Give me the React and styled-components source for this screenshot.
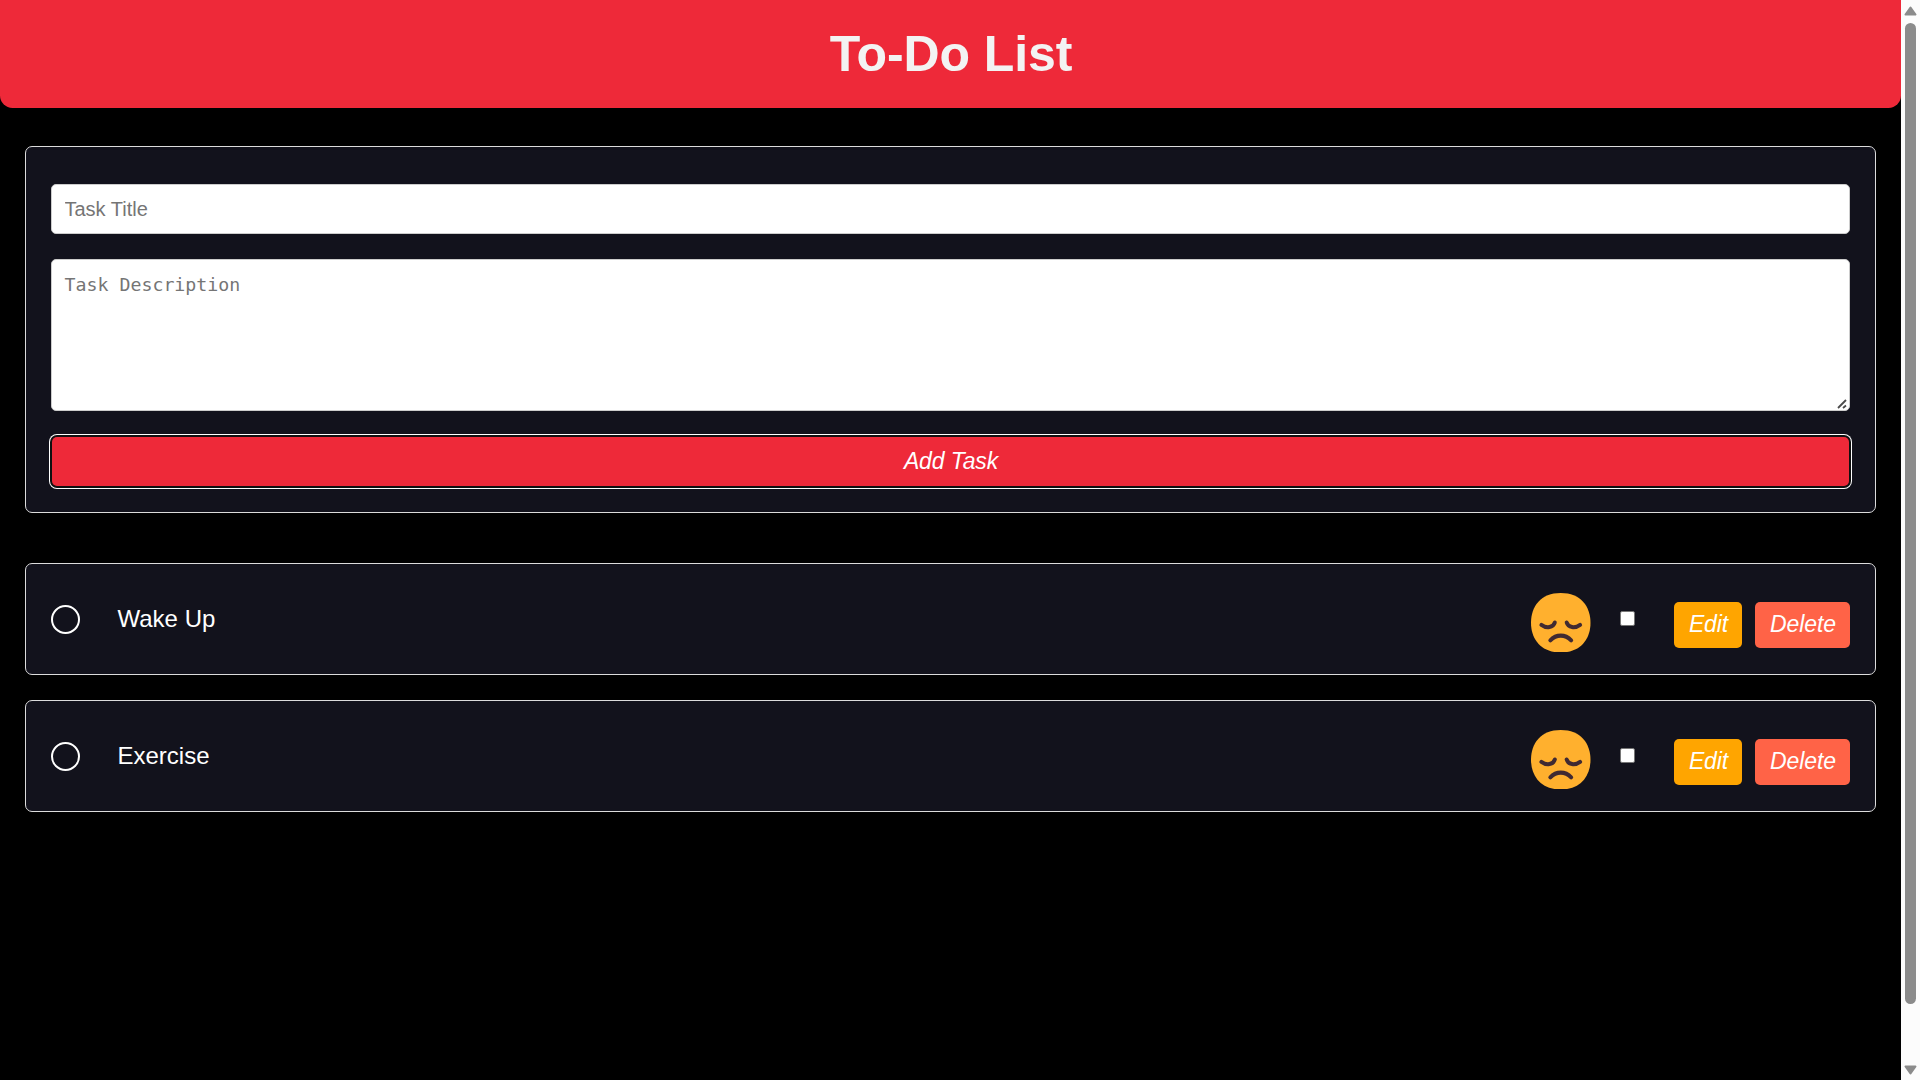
import React from 'react';
import styled, { createGlobalStyle } from 'styled-components';

const Global = createGlobalStyle`
  * { box-sizing: border-box; }
  body { margin: 0; background: #000; overflow: hidden; font-family: "Liberation Sans", Arial, sans-serif; }
`;
const Screen = styled.div`
  display: flex;
  width: 1920px;
  height: 1080px;
  background: #000;
`;
const Page = styled.div`
  width: 1901px;
`;
const Header = styled.header`
  height: 108px;
  display: flex;
  align-items: center;
  justify-content: center;
  background: #ee2939;
  border-radius: 0 0 12.5px 12.5px;
`;
const Title = styled.h1`
  margin: 0 0 0 1px;
  font-size: 50px;
  letter-spacing: -0.1px;
  line-height: 58px;
  font-weight: 700;
  color: #f3f3f3;
`;
const Form = styled.form`
  margin: 38px 25px 0;
  height: 367px;
  padding: 37px 25px 0;
  display: flex;
  flex-direction: column;
  background: #12121c;
  border: 1px solid #dcdcdc;
  border-radius: 7px;
`;
const TextInput = styled.input`
  width: 100%;
  height: 50px;
  flex: none;
  padding: 0 12.5px;
  border: 1px solid #ccc;
  border-radius: 5px;
  background: #fff;
  font: 20px "Liberation Sans", Arial, sans-serif;
  outline: none;
  &::placeholder { color: #757575; }
`;
const AreaWrap = styled.div`
  position: relative;
  flex: none;
  margin-top: 25px;
`;
const TextArea = styled.textarea`
  display: block;
  width: 100%;
  height: 152px;
  padding: 13px 12.5px;
  border: 1px solid #ccc;
  border-radius: 5px;
  background: #fff;
  font: 18.25px/24px "DejaVu Sans Mono", monospace;
  outline: none;
  resize: none;
  &::placeholder { color: #757575; }
`;
const Grip = styled.svg`
  position: absolute;
  right: 2px;
  bottom: 1px;
  width: 11px;
  height: 11px;
  pointer-events: none;
`;
const Button = styled.button`
  height: 46px;
  width: ${p => p.$width};
  padding: 0 0 1px 1px;
  border: 0;
  border-radius: 5px;
  background: ${p => p.$bg};
  color: #fff;
  font: italic 23px "Liberation Sans", Arial, sans-serif;
  letter-spacing: -0.1px;
`;
const AddButton = styled(Button)`
  height: 49px;
  flex: none;
  margin: 26px 1px 0;
  box-shadow: 0 0 0 2px #101010, 0 0 0 3px #fff;
`;
const List = styled.ul`
  list-style: none;
  margin: 50px 25px 0;
  padding: 0;
  display: flex;
  flex-direction: column;
  gap: 25px;
`;
const Task = styled.li`
  height: 112px;
  padding: 0 25px;
  display: flex;
  align-items: center;
  background: #12121c;
  border: 1px solid #dcdcdc;
  border-radius: 7px;
`;
const Circle = styled.span`
  width: 29px;
  height: 29px;
  border: 2px solid #fff;
  border-radius: 50%;
`;
const Name = styled.span`
  flex: 1;
  margin-left: 37.5px;
  padding-bottom: 2px;
  color: #fff;
  font-size: 24px;
  line-height: 29px;
`;
const Face = styled.svg`
  width: 59.5px;
  height: 59.5px;
  margin: 7px 29.5px 0 0;
`;
const Check = styled.input`
  width: 15px;
  height: 15px;
  margin: 0 39px 1px 0;
  appearance: none;
  background: #fff;
  border: 1px solid #767676;
  border-radius: 2px;
`;
const Actions = styled.div`
  display: flex;
  gap: 13px;
  padding-top: 11px;
`;
const Track = styled.div`
  width: 19px;
  height: 1080px;
  padding: 5px 0 4px;
  display: flex;
  flex-direction: column;
  align-items: center;
  background: #fcfcfc;
`;
const Arrow = styled.svg`
  width: 13px;
  height: 12px;
`;
const Thumb = styled.div`
  width: 11px;
  height: 981px;
  margin: 6px 0 auto;
  border-radius: 6px;
  background: #8b8b8b;
`;

function SadFace() {
  return (
    <Face viewBox="2 2 28 28">
      <path d="M16 30c9.330 0 14-6.270 14-14S25.330 2 16 2 2 8.270 2 16s4.660 14 14 14Z" fill="#ffb02e" />
      <g fill="none" stroke="#402a32" strokeWidth="1.900" strokeLinecap="round">
        <path d="M6.900 17C9.300 18.800 12.500 18.300 13.200 15.900" />
        <path d="M18.800 15.900C19.500 18.300 22.700 18.800 25.100 17" />
        <path d="M11.100 24.300C13.900 21.300 18.100 21.300 20.900 24.300" />
      </g>
    </Face>
  );
}

export default function App() {
  return (
    <Screen>
      <Global />
      <Page>
        <Header><Title>To-Do List</Title></Header>
        <Form>
          <TextInput placeholder="Task Title" />
          <AreaWrap>
            <TextArea placeholder="Task Description" />
            <Grip viewBox="0 0 11 11">
              <path d="M1 9L9 1M6 9L9 6.500" stroke="#4a4a4a" strokeWidth="1.800" />
            </Grip>
          </AreaWrap>
          <AddButton type="button" $bg="#ee2939" $width="auto">Add Task</AddButton>
        </Form>
        <List>
          {['Wake Up', 'Exercise'].map(name => (
            <Task key={name}>
              <Circle />
              <Name>{name}</Name>
              <SadFace />
              <Check type="checkbox" />
              <Actions>
                <Button $bg="#ffa500" $width="68px">Edit</Button>
                <Button $bg="#ff6347" $width="95px">Delete</Button>
              </Actions>
            </Task>
          ))}
        </List>
      </Page>
      <Track>
        <Arrow viewBox="0 0 13 12"><path d="M6.500 2.500L11.500 9.500H1.500Z" fill="#8b8b8b" stroke="#8b8b8b" strokeWidth="2" strokeLinejoin="round" /></Arrow>
        <Thumb />
        <Arrow viewBox="0 0 13 12"><path d="M6.500 9.500L11.500 2.500H1.500Z" fill="#8b8b8b" stroke="#8b8b8b" strokeWidth="2" strokeLinejoin="round" /></Arrow>
      </Track>
    </Screen>
  );
}
